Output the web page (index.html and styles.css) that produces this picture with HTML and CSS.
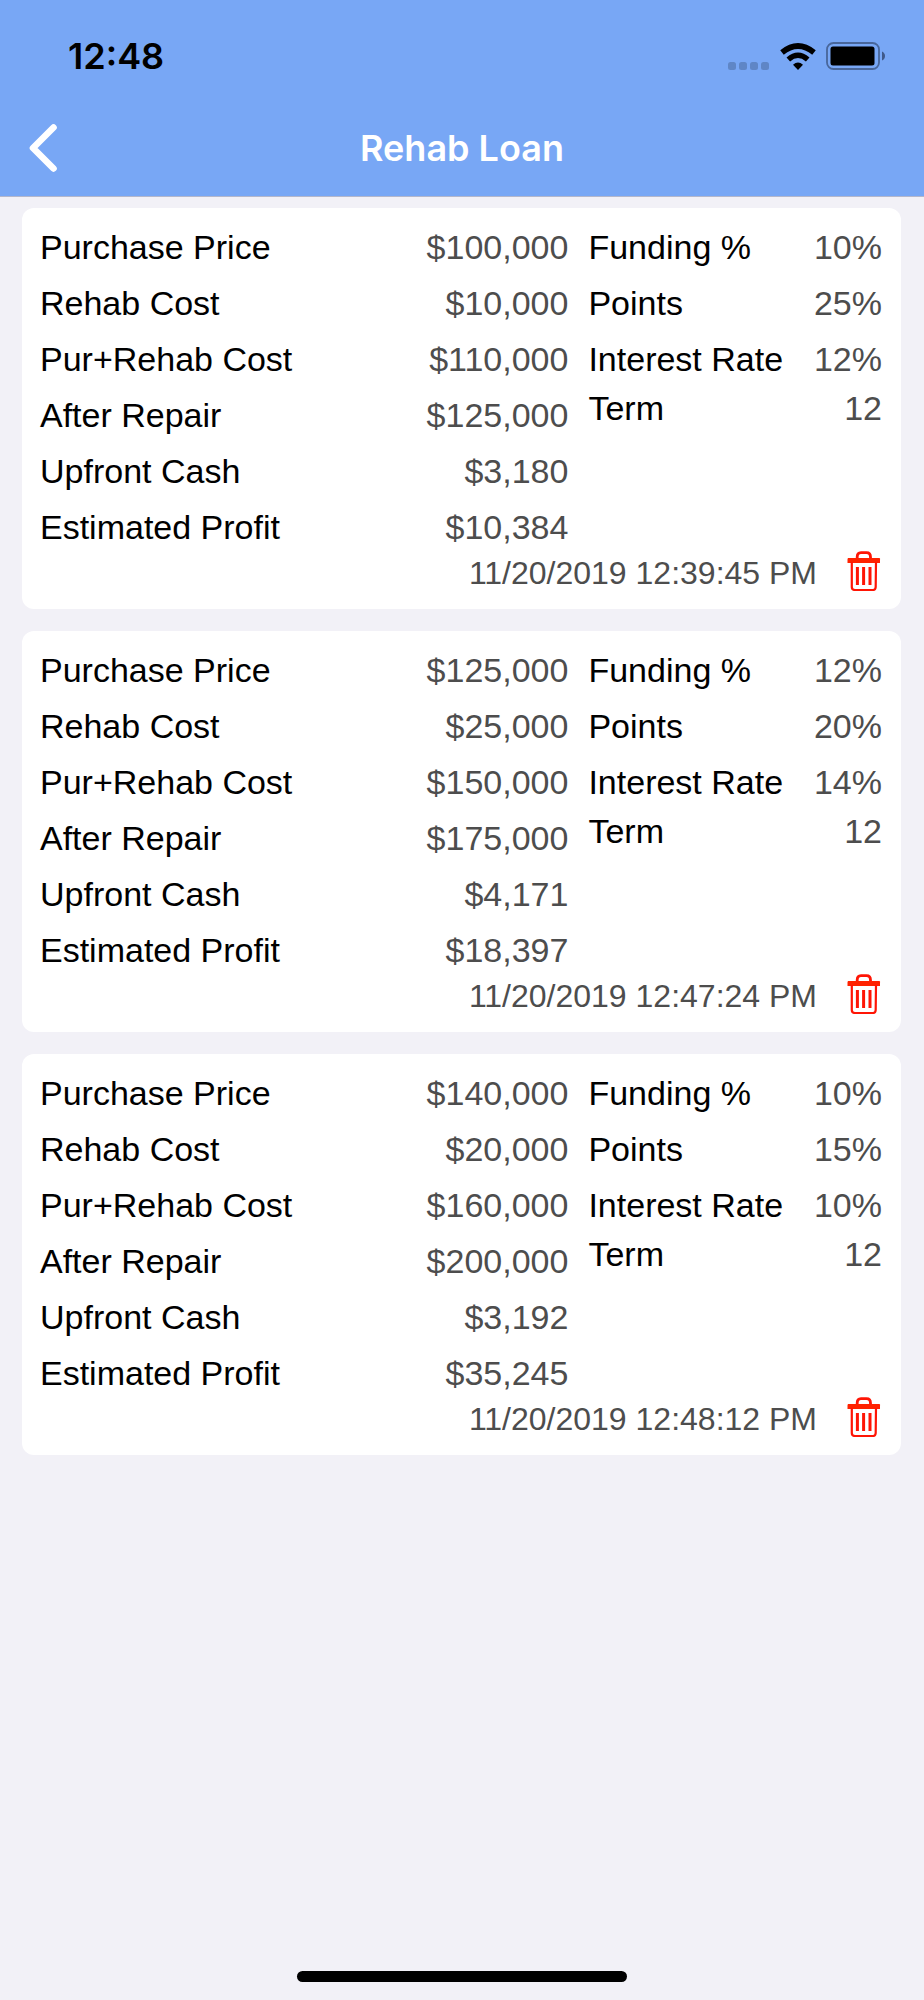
FILE: index.html
```html
<!DOCTYPE html>
<html lang="en">
<head>
    <meta charset="utf-8">
    <meta name="viewport" content="width=device-width, initial-scale=1">
    <title>Rehab Loan</title>
    <link rel="stylesheet" href="styles.css">
</head>
<body>
    <!-- shared trash icon -->
    <svg class="sprite" aria-hidden="true">
        <symbol id="trash" viewBox="0 0 35 40">
            <path d="M10.200 8V6Q10.200 1.700 14 1.700H19.500Q23.500 1.700 23.500 6V8" fill="none" stroke="#ff1505" stroke-width="2.800"/>
            <path d="M1 7H32.500Q33.500 7.500 33 9V12H0.500V8.500Q0.500 7.500 1 7Z" fill="#ff2200"/>
            <path d="M4.800 11V36Q4.800 39 8 39H26Q28.500 39 28.700 36L29 11" fill="none" stroke="#ff1505" stroke-width="2.200"/>
            <path d="M10.400 16V34M16.600 16V34M23 16V34" fill="none" stroke="#ff1505" stroke-width="3"/>
        </symbol>
    </svg>

    <header class="header">
        <div class="status-bar">
            <span class="time">12:48</span>
            <div class="status-icons">
                <svg class="signal" viewBox="0 0 42 8" fill="#5f86c6">
                    <rect width="8" height="8" rx="2.500"/>
                    <rect x="11" width="8" height="8" rx="2.500"/>
                    <rect x="22" width="8" height="8" rx="2.500"/>
                    <rect x="33" width="8" height="8" rx="2.500"/>
                </svg>
                <svg class="wifi" viewBox="0 0 36 27">
                    <path d="M2 9.500Q18 -3.500 34 9.500" fill="none" stroke="#000" stroke-width="5.600"/>
                    <path d="M8.300 16.500Q18 8 27.700 16.500" fill="none" stroke="#000" stroke-width="5.400"/>
                    <path d="M18 27L13 21.800Q18 17 23 21.800Z"/>
                </svg>
                <svg class="battery" viewBox="0 0 60 28">
                    <rect x="1" y="1" width="52" height="26" rx="6.500" fill="none" stroke="#48669a" stroke-width="1.800"/>
                    <rect x="4.500" y="4.500" width="44" height="19" rx="2.500"/>
                    <path d="M56 9.500Q59 11 59 14T56 18.500Z" fill="#3f598a"/>
                </svg>
            </div>
        </div>
        <div class="nav-bar">
            <button class="back" type="button" aria-label="Back">
                <svg viewBox="0 0 28 48">
                    <path d="M24.500 3.500L4 24L24.500 44.500" fill="none" stroke="#fff" stroke-width="6.600" stroke-linecap="round" stroke-linejoin="round"/>
                </svg>
            </button>
            <h1 class="title">Rehab Loan</h1>
        </div>
    </header>

    <main class="loans">
        <article class="card">
            <div class="details">
                <dl class="column">
                    <div class="row"><dt>Purchase Price</dt><dd>$100,000</dd></div>
                    <div class="row"><dt>Rehab Cost</dt><dd>$10,000</dd></div>
                    <div class="row"><dt>Pur+Rehab Cost</dt><dd>$110,000</dd></div>
                    <div class="row"><dt>After Repair</dt><dd>$125,000</dd></div>
                    <div class="row"><dt>Upfront Cash</dt><dd>$3,180</dd></div>
                    <div class="row"><dt>Estimated Profit</dt><dd>$10,384</dd></div>
                </dl>
                <dl class="column">
                    <div class="row"><dt>Funding %</dt><dd>10%</dd></div>
                    <div class="row"><dt>Points</dt><dd>25%</dd></div>
                    <div class="row"><dt>Interest Rate</dt><dd>12%</dd></div>
                    <div class="row term"><dt>Term</dt><dd>12</dd></div>
                </dl>
            </div>
            <div class="card-footer">
                <time datetime="2019-11-20T12:39:45">11/20/2019 12:39:45 PM</time>
                <button class="delete" type="button" aria-label="Delete"><svg><use href="#trash"/></svg></button>
            </div>
        </article>

        <article class="card">
            <div class="details">
                <dl class="column">
                    <div class="row"><dt>Purchase Price</dt><dd>$125,000</dd></div>
                    <div class="row"><dt>Rehab Cost</dt><dd>$25,000</dd></div>
                    <div class="row"><dt>Pur+Rehab Cost</dt><dd>$150,000</dd></div>
                    <div class="row"><dt>After Repair</dt><dd>$175,000</dd></div>
                    <div class="row"><dt>Upfront Cash</dt><dd>$4,171</dd></div>
                    <div class="row"><dt>Estimated Profit</dt><dd>$18,397</dd></div>
                </dl>
                <dl class="column">
                    <div class="row"><dt>Funding %</dt><dd>12%</dd></div>
                    <div class="row"><dt>Points</dt><dd>20%</dd></div>
                    <div class="row"><dt>Interest Rate</dt><dd>14%</dd></div>
                    <div class="row term"><dt>Term</dt><dd>12</dd></div>
                </dl>
            </div>
            <div class="card-footer">
                <time datetime="2019-11-20T12:47:24">11/20/2019 12:47:24 PM</time>
                <button class="delete" type="button" aria-label="Delete"><svg><use href="#trash"/></svg></button>
            </div>
        </article>

        <article class="card">
            <div class="details">
                <dl class="column">
                    <div class="row"><dt>Purchase Price</dt><dd>$140,000</dd></div>
                    <div class="row"><dt>Rehab Cost</dt><dd>$20,000</dd></div>
                    <div class="row"><dt>Pur+Rehab Cost</dt><dd>$160,000</dd></div>
                    <div class="row"><dt>After Repair</dt><dd>$200,000</dd></div>
                    <div class="row"><dt>Upfront Cash</dt><dd>$3,192</dd></div>
                    <div class="row"><dt>Estimated Profit</dt><dd>$35,245</dd></div>
                </dl>
                <dl class="column">
                    <div class="row"><dt>Funding %</dt><dd>10%</dd></div>
                    <div class="row"><dt>Points</dt><dd>15%</dd></div>
                    <div class="row"><dt>Interest Rate</dt><dd>10%</dd></div>
                    <div class="row term"><dt>Term</dt><dd>12</dd></div>
                </dl>
            </div>
            <div class="card-footer">
                <time datetime="2019-11-20T12:48:12">11/20/2019 12:48:12 PM</time>
                <button class="delete" type="button" aria-label="Delete"><svg><use href="#trash"/></svg></button>
            </div>
        </article>
    </main>

    <div class="home-indicator"></div>
</body>
</html>
```
FILE: styles.css
```css
* {
    box-sizing: border-box;
}

body {
    margin: 0;
    min-height: 100vh;
    display: flex;
    flex-direction: column;
    background: #f2f1f7;
    color: #000;
    font-family: "Liberation Sans", Arial, sans-serif;
    font-size: 34px;
}

button {
    padding: 0;
    border: none;
    background: none;
    cursor: pointer;
}

svg {
    display: block;
}

.sprite {
    display: none;
}

/* Header */
.header {
    background: #78a7f5;
    border-bottom: 1px solid #b3b7cc;
    font-family: Inter, sans-serif;
    font-size: 36px;
    font-weight: 600;
}

.status-bar {
    display: flex;
    justify-content: space-between;
    align-items: center;
    height: 99px;
    padding: 12px 38px 0 68px;
}

.status-icons {
    display: flex;
    align-items: flex-end;
    gap: 10px;
}

.signal {
    width: 42px;
    height: 8px;
}

.wifi {
    width: 36px;
    height: 27px;
}

.battery {
    width: 60px;
    height: 28px;
}

.nav-bar {
    display: grid;
    grid-template-columns: 1fr auto 1fr;
    align-items: center;
    height: 97px;
    padding: 0 29px;
}

.back {
    justify-self: start;
}

.back svg {
    width: 28px;
    height: 48px;
}

.title {
    margin: 0;
    color: #fff;
    font-size: 36px;
    font-weight: 600;
}

/* Loan cards */
.loans {
    flex: 1;
    display: flex;
    flex-direction: column;
    gap: 22px;
    padding: 11px 23px 22px 22px;
}

.card {
    padding: 16px 19px 18px 18px;
    border-radius: 12px;
    background: #fff;
}

.details {
    display: grid;
    grid-template-columns: 9fr 5fr;
    gap: 20px;
}

.column {
    display: flex;
    flex-direction: column;
    gap: 10px;
    margin: 0;
}

.row {
    display: flex;
    justify-content: space-between;
    line-height: 46px;
}

.term {
    line-height: 32px;
}

.row dd {
    margin: 0;
    color: #4d4d4d;
}

.card-footer {
    display: flex;
    justify-content: flex-end;
    align-items: flex-end;
    gap: 30px;
    margin-top: 1px;
    color: #4d4d4d;
    font-size: 32px;
    line-height: 36px;
}

.delete svg {
    width: 35px;
    height: 40px;
}

.home-indicator {
    align-self: center;
    width: 330px;
    max-width: 50%;
    height: 11px;
    margin-bottom: 18px;
    border-radius: 6px;
    background: #000;
}
```
